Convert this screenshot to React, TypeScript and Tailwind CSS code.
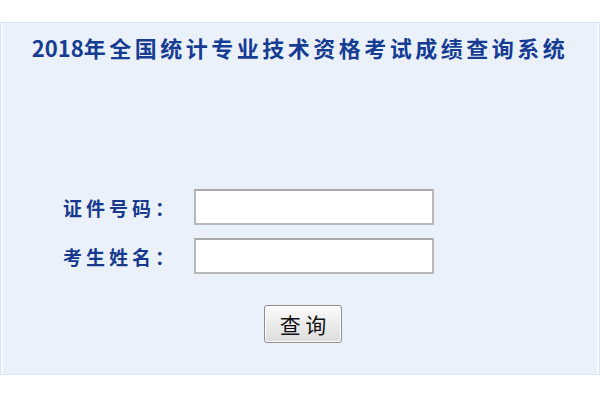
import React, { useState } from 'react';

const cjk = "font-['Noto_Sans_CJK_SC','Noto_Sans',sans-serif]";

export default function App() {
  const [idNo, setIdNo] = useState('');
  const [name, setName] = useState('');

  return (
    <div className={`w-[600px] h-[400px] bg-white pt-[22px] ${cjk}`}>
      <div className="h-[353px] bg-[#eaf1fb] border border-[#dbe5f3] shadow-[inset_2px_0_0_#f7faff,inset_-2px_0_0_#f7faff] flex flex-col">
        {/* title */}
        <div className="h-[48px] flex items-center justify-center">
          <h1 className="text-[22px] leading-none font-bold text-[#163c93] whitespace-nowrap">
            <span>2018</span>
            <span className="tracking-[3.5px]">年全国统计专业技术资格考试成绩查询系统</span>
          </h1>
        </div>

        {/* form */}
        <div className="mt-[118px] pl-[62px] flex flex-col gap-[13px]">
          <div className="flex items-center">
            <label className="w-[131px] text-[19px] leading-none font-bold text-[#173a8e] tracking-[4px]">证件号码：</label>
            <input
              type="text"
              value={idNo}
              onChange={(e) => setIdNo(e.target.value)}
              className="w-[240px] h-[36px] bg-white border-2 border-[#b8b8b8] border-t-[#a8a8a8] px-1 text-sm outline-none"
            />
          </div>
          <div className="flex items-center">
            <label className="w-[131px] text-[19px] leading-none font-bold text-[#173a8e] tracking-[4px]">考生姓名：</label>
            <input
              type="text"
              value={name}
              onChange={(e) => setName(e.target.value)}
              className="w-[240px] h-[36px] bg-white border-2 border-[#b8b8b8] border-t-[#a8a8a8] px-1 text-sm outline-none"
            />
          </div>
        </div>

        <div className="mt-[31px] pl-[263px]">
          <button
            type="button"
            className="w-[78px] h-[38px] rounded-[3px] border border-[#8e8e8e] bg-gradient-to-b from-[#fbfbfb] to-[#dcdcdc] shadow-[inset_0_0_0_1px_#ffffff] text-[21px] leading-none text-[#111]"
          >
            查 询
          </button>
        </div>
      </div>
    </div>
  );
}
